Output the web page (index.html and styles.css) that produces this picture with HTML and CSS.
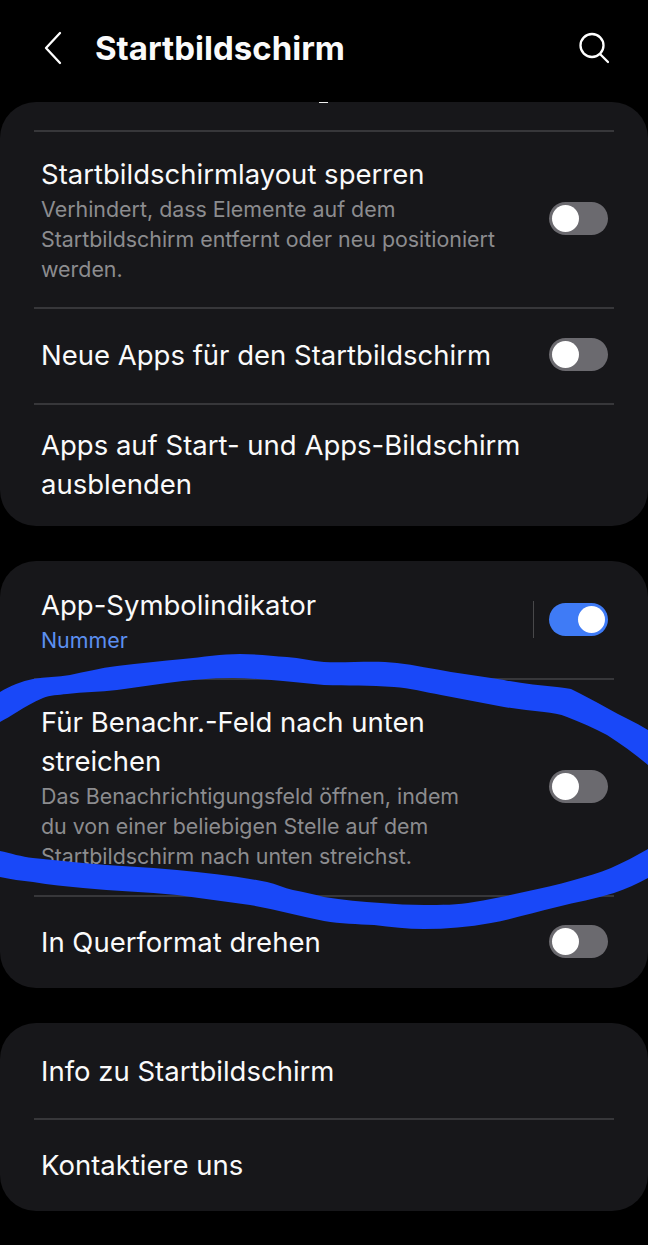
FILE: index.html
```html
<!DOCTYPE html>
<html lang="de">
<head>
  <meta charset="UTF-8">
  <meta name="viewport" content="width=device-width, initial-scale=1.0">
  <title>Startbildschirm</title>
  <link rel="stylesheet" href="styles.css">
</head>
<body>
  <header class="topbar">
    <svg class="back-icon" width="20" height="34" viewBox="0 0 20 34" fill="none" stroke="#fff" stroke-width="2.3" stroke-linecap="round" stroke-linejoin="round">
      <path d="M17 2 L3 17 L17 32"/>
    </svg>
    <h1 class="page-title">Startbildschirm</h1>
    <svg class="search-icon" width="30" height="32" viewBox="0 0 30 32" fill="none" stroke="#fff" stroke-width="2.3" stroke-linecap="round">
      <ellipse cx="13" cy="13.5" rx="11.5" ry="11.5"/>
      <path d="M21 22 L29 30"/>
    </svg>
  </header>

  <main>
    <section class="card">
      <div class="cut-off-text"><span class="descender"></span></div>
      <div class="row">
        <div class="row-text">
          <div class="row-title">Startbildschirmlayout sperren</div>
          <div class="row-sub">Verhindert, dass Elemente auf dem<br>Startbildschirm entfernt oder neu positioniert<br>werden.</div>
        </div>
        <span class="toggle"></span>
      </div>
      <div class="row row-single row-new-apps">
        <div class="row-text">
          <div class="row-title">Neue Apps für den Startbildschirm</div>
        </div>
        <span class="toggle"></span>
      </div>
      <div class="row row-hide-apps">
        <div class="row-text">
          <div class="row-title">Apps auf Start- und Apps-Bildschirm<br>ausblenden</div>
        </div>
      </div>
    </section>

    <section class="card">
      <div class="row">
        <div class="row-text">
          <div class="row-title">App-Symbolindikator</div>
          <div class="row-value">Nummer</div>
        </div>
        <span class="v-divider"></span>
        <span class="toggle toggle-on"></span>
      </div>
      <div class="row row-swipe">
        <div class="row-text">
          <div class="row-title">Für Benachr.-Feld nach unten<br>streichen</div>
          <div class="row-sub">Das Benachrichtigungsfeld öffnen, indem<br>du von einer beliebigen Stelle auf dem<br>Startbildschirm nach unten streichst.</div>
        </div>
        <span class="toggle"></span>
      </div>
      <div class="row row-single row-last">
        <div class="row-text">
          <div class="row-title">In Querformat drehen</div>
        </div>
        <span class="toggle"></span>
      </div>
    </section>

    <section class="card">
      <div class="row row-single">
        <div class="row-text">
          <div class="row-title">Info zu Startbildschirm</div>
        </div>
      </div>
      <div class="row row-single row-last">
        <div class="row-text">
          <div class="row-title">Kontaktiere uns</div>
        </div>
      </div>
    </section>
  </main>

  <!-- hand drawn marker stroke on top of the screenshot -->
  <svg class="marker" width="648" height="1245" viewBox="0 0 648 1245">
    <path d="M0 692 C10 686 22 681 33 679 C45 677 58 677 70 675 C85 672 100 668 117 666 C140 663 162 661 183 659 C203 657 222 654 240 654 C257 654 272 656 287 657 C300 658 312 661 324 662 C350 663 375 660 397 663 C415 665 433 669 451 672 C469 675 487 677 504 680 C522 684 540 685 557 687 C563 688 567 688 571 689 C583 695 595 701 607 708 C621 716 635 722 648 730 L648 765 C635 754 621 744 607 735 C594 728 580 722 567 717 C560 714 552 713 544 712 C531 711 517 709 504 707 C483 703 462 699 441 695 C425 692 410 688 394 687 C370 685 347 686 324 685 C310 684 297 682 283 681 C266 680 249 678 233 678 C210 678 188 680 167 683 C150 685 134 688 117 690 C100 692 83 692 67 694 C58 695 50 695 43 698 C33 702 25 707 17 712 C11 716 5 719 0 722 Z"/>
    <path d="M0 851 C10 853 22 857 33 858 C50 860 66 861 83 863 C114 866 146 867 177 870 C207 873 238 876 267 882 C276 884 284 888 293 890 C303 892 314 894 324 897 C343 900 362 902 381 903 C395 904 410 905 424 905 C441 905 458 905 474 902 C491 899 507 896 524 892 C541 888 557 885 574 880 C587 876 599 873 611 868 C624 862 636 856 648 849 L648 878 C637 884 626 889 614 893 C595 899 576 902 557 907 C535 912 513 919 491 923 C469 927 446 929 424 929 C407 929 391 927 374 925 C357 924 341 924 324 921 C299 916 275 909 250 905 C226 902 201 898 177 895 C146 892 114 891 83 888 C66 886 50 885 33 882 C22 881 10 879 0 877 Z"/>
  </svg>
</body>
</html>
```

FILE: styles.css
```css
body {
  margin: 0;
  background: #000;
  color: #fafafa;
  font-family: Inter, Roboto, sans-serif;
  overflow: hidden;
}
.topbar {
  display: flex;
  align-items: center;
  height: 102px;
  padding: 0 39px 6px 43px;
  box-sizing: border-box;
}
.page-title {
  flex: 1;
  margin: 0 0 0 32px;
  font-size: 33px;
  font-weight: 700;
}
.card {
  margin-bottom: 35px;
  padding: 0 34px;
  background: #17171a;
  border-radius: 36px;
  overflow: hidden;
}
.cut-off-text {
  position: relative;
  height: 28px;
}
.descender {
  position: absolute;
  top: 0;
  left: 285px;
  width: 9px;
  height: 1px;
  background: #eee;
}
.row {
  display: flex;
  align-items: center;
  padding: 23px 6px 23px 7px;
  border-top: 2px solid #37373a;
}
.row:first-child {
  border-top: none;
  padding-top: 25px;
}
.row-single {
  min-height: 46px;
  padding-top: 24px;
  padding-bottom: 24px;
}
.row-new-apps {
  padding-top: 23px;
  padding-bottom: 25px;
}
.row-last {
  min-height: 43px;
}
.row-hide-apps {
  padding-top: 21px;
  padding-bottom: 22px;
}
.row-swipe {
  padding-bottom: 24px;
}
.row-text {
  flex: 1;
}
.row-title {
  font-size: 27.5px;
  line-height: 39px;
}
.row-sub {
  font-size: 21.4px;
  line-height: 30px;
  color: #8c8c8f;
}
.row-value {
  font-size: 21.4px;
  line-height: 30px;
  color: #5c8ff0;
}
.v-divider {
  width: 1px;
  height: 37px;
  margin: 0 15px 2px 0;
  background: #48484a;
}
.toggle {
  position: relative;
  width: 59px;
  height: 33px;
  margin-bottom: 2px;
  border-radius: 17px;
  background: #6b6a6f;
}
.toggle::after {
  content: "";
  position: absolute;
  top: 3px;
  left: 3px;
  width: 27px;
  height: 27px;
  border-radius: 50%;
  background: #fff;
}
.toggle-on {
  background: #3f7bf6;
}
.toggle-on::after {
  left: 29px;
}
.marker {
  position: absolute;
  top: 0;
  left: 0;
  fill: #1948f8;
  pointer-events: none;
}
```
